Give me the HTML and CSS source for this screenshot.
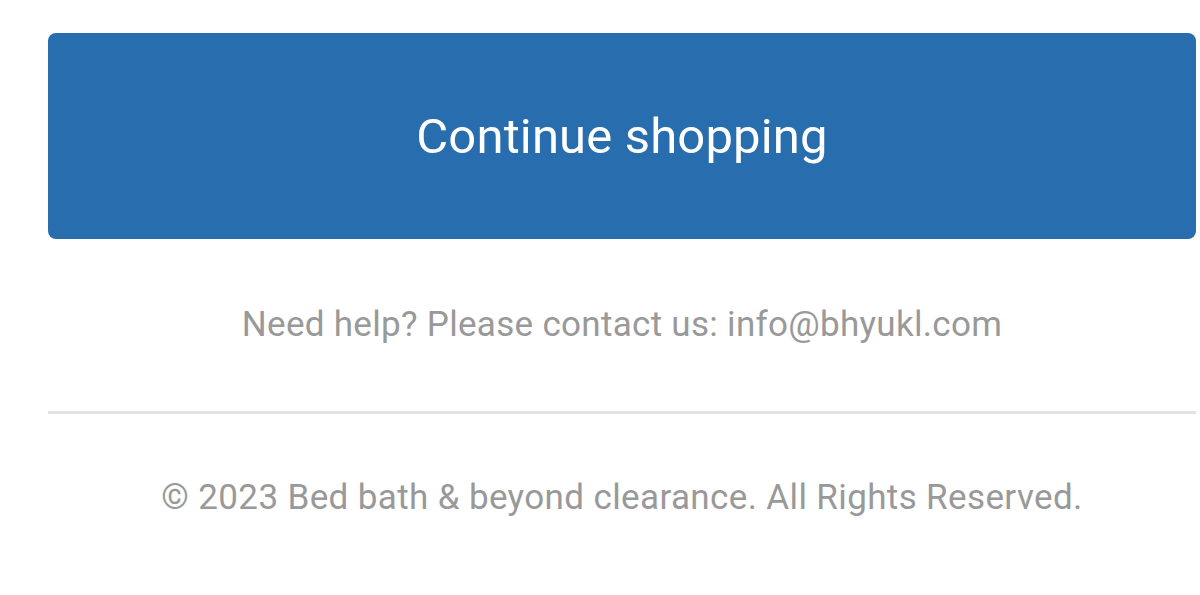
FILE: index.html
```html
<!DOCTYPE html>
<html lang="en">
<head>
    <meta charset="UTF-8">
    <meta name="viewport" content="width=device-width, initial-scale=1.0">
    <title>Order complete</title>
    <link rel="stylesheet" href="styles.css">
</head>
<body>
    <div class="page">
        <a href="#" class="continue-btn">Continue shopping</a>

        <p class="help">Need help? Please contact us: info@bhyukl.com</p>

        <div class="footer">
            <p>&copy; 2023 Bed bath &amp; beyond clearance. All Rights Reserved.</p>
        </div>
    </div>
</body>
</html>
```

FILE: styles.css
```css
body {
    margin: 0;
    font-family: Roboto, "Liberation Sans", sans-serif;
    background-color: #fff;
}

.page {
    width: 1148px;
    margin-left: 48px;
    padding-top: 33px;
}

.continue-btn {
    display: flex;
    align-items: center;
    justify-content: center;
    height: 206px;
    background-color: #286dad;
    border-radius: 8px;
    color: #fff;
    font-size: 49px;
    letter-spacing: 0.15px;
    text-decoration: none;
}

.help {
    margin: 0;
    padding: 65px 0 65px;
    text-align: center;
    color: #999;
    font-size: 35px;
    line-height: 42px;
    letter-spacing: 0.3px;
}

.footer {
    border-top: 3px solid #e3e3e3;
}

.footer p {
    margin: 0;
    padding-top: 63px;
    text-align: center;
    color: #999;
    font-size: 35px;
    line-height: 42px;
    letter-spacing: 0.37px;
}
```
